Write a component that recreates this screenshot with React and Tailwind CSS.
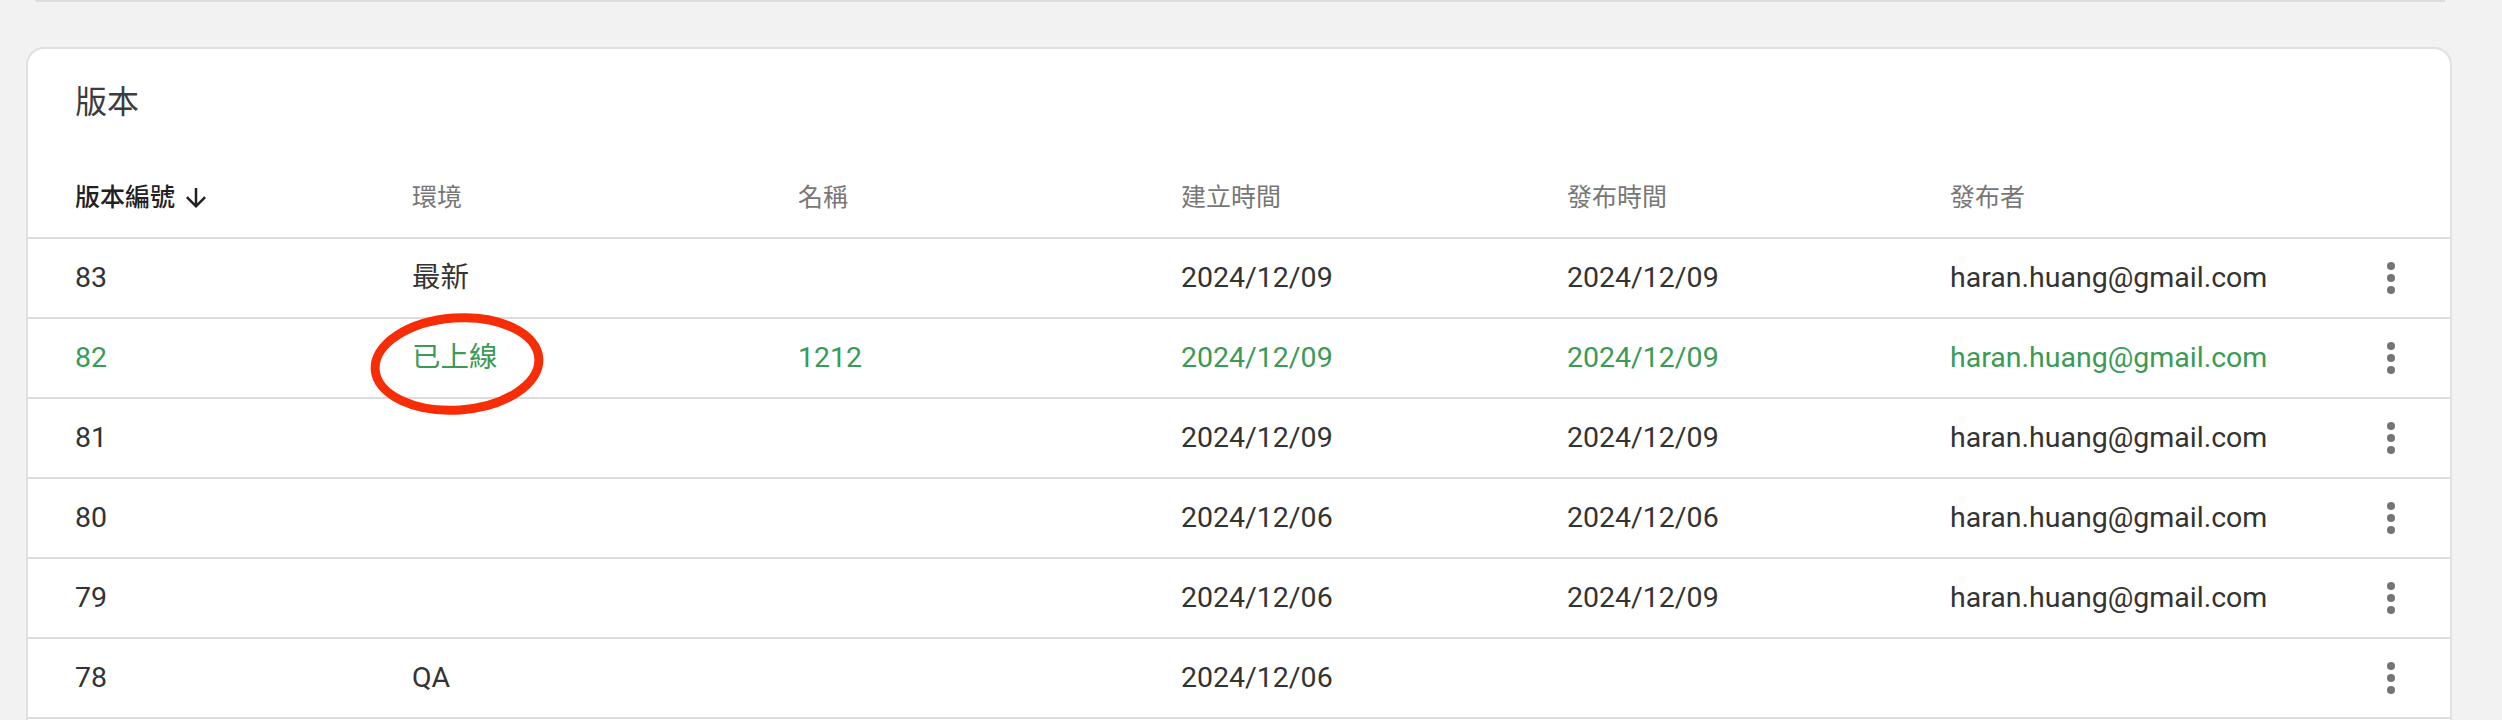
import React from "react";

const rows = [
  { id: "83", env: "最新", name: "", created: "2024/12/09", published: "2024/12/09", by: "haran.huang@gmail.com" },
  { id: "82", env: "已上線", name: "1212", created: "2024/12/09", published: "2024/12/09", by: "haran.huang@gmail.com", live: true },
  { id: "81", env: "", name: "", created: "2024/12/09", published: "2024/12/09", by: "haran.huang@gmail.com" },
  { id: "80", env: "", name: "", created: "2024/12/06", published: "2024/12/06", by: "haran.huang@gmail.com" },
  { id: "79", env: "", name: "", created: "2024/12/06", published: "2024/12/09", by: "haran.huang@gmail.com" },
  { id: "78", env: "QA", name: "", created: "2024/12/06", published: "", by: "" },
];

const grid =
  "grid grid-cols-[337px_386px_383px_386px_383px_1fr_48px] items-center pl-[47px] pr-[35px]";

function MoreButton() {
  return (
    <button type="button" className="flex h-[48px] w-[48px] items-center justify-center">
      <svg viewBox="0 0 8 32" className="h-[32px] w-[8px] fill-[#757575]">
        <circle cx="4" cy="4" r="4" />
        <circle cx="4" cy="16" r="4" />
        <circle cx="4" cy="28" r="4" />
      </svg>
    </button>
  );
}

export default function App() {
  return (
    <div className="relative h-[720px] overflow-hidden bg-[#f2f2f2] font-['Roboto','Noto_Sans_CJK_TC',sans-serif]">
      {/* bottom edge of the card above */}
      <div className="ml-[35px] mr-[57px] h-[2px] rounded-bl-[4px] bg-[#dcdcdc]" />

      <div className="ml-[26px] mr-[50px] mt-[45px] rounded-[18px] border-2 border-[#e0e0e0] bg-white pb-[200px]">
        <div className="pl-[47px] pt-[33px] pb-[37px]">
          <h2 className="text-[32px] leading-[40px] font-normal text-[#3c3c3c]">版本</h2>
        </div>

        <div className={`${grid} h-[80px] border-b-2 border-[#dcdcdc] text-[25px] text-[#777777]`}>
          <div className="flex items-center gap-[6px] font-medium text-[#222222]">
            <span>版本編號</span>
            <svg viewBox="0 0 24 24" className="h-[30px] w-[30px] fill-[#222222]">
              <path d="M20 12l-1.41-1.41L13 16.17V4h-2v12.17l-5.58-5.59L4 12l8 8 8-8z" />
            </svg>
          </div>
          <div>環境</div>
          <div>名稱</div>
          <div>建立時間</div>
          <div>發布時間</div>
          <div>發布者</div>
          <div />
        </div>

        {rows.map((r) => (
          <div
            key={r.id}
            className={`${grid} h-[80px] border-b-2 border-[#dcdcdc] text-[28.5px] ${
              r.live ? "text-[#3a9a56]" : "text-[#333333]"
            }`}
          >
            <div>{r.id}</div>
            <div>{r.env}</div>
            <div>{r.name}</div>
            <div>{r.created}</div>
            <div>{r.published}</div>
            <div>{r.by}</div>
            <MoreButton />
          </div>
        ))}
      </div>

      {/* hand-drawn annotation */}
      <svg
        viewBox="0 0 190 120"
        className="pointer-events-none absolute left-[362px] top-[304px] h-[120px] w-[190px]"
      >
        <ellipse
          cx="95"
          cy="60"
          rx="82"
          ry="46"
          transform="rotate(-4 95 60)"
          fill="none"
          stroke="#f72d08"
          strokeWidth="9"
        />
      </svg>
    </div>
  );
}
